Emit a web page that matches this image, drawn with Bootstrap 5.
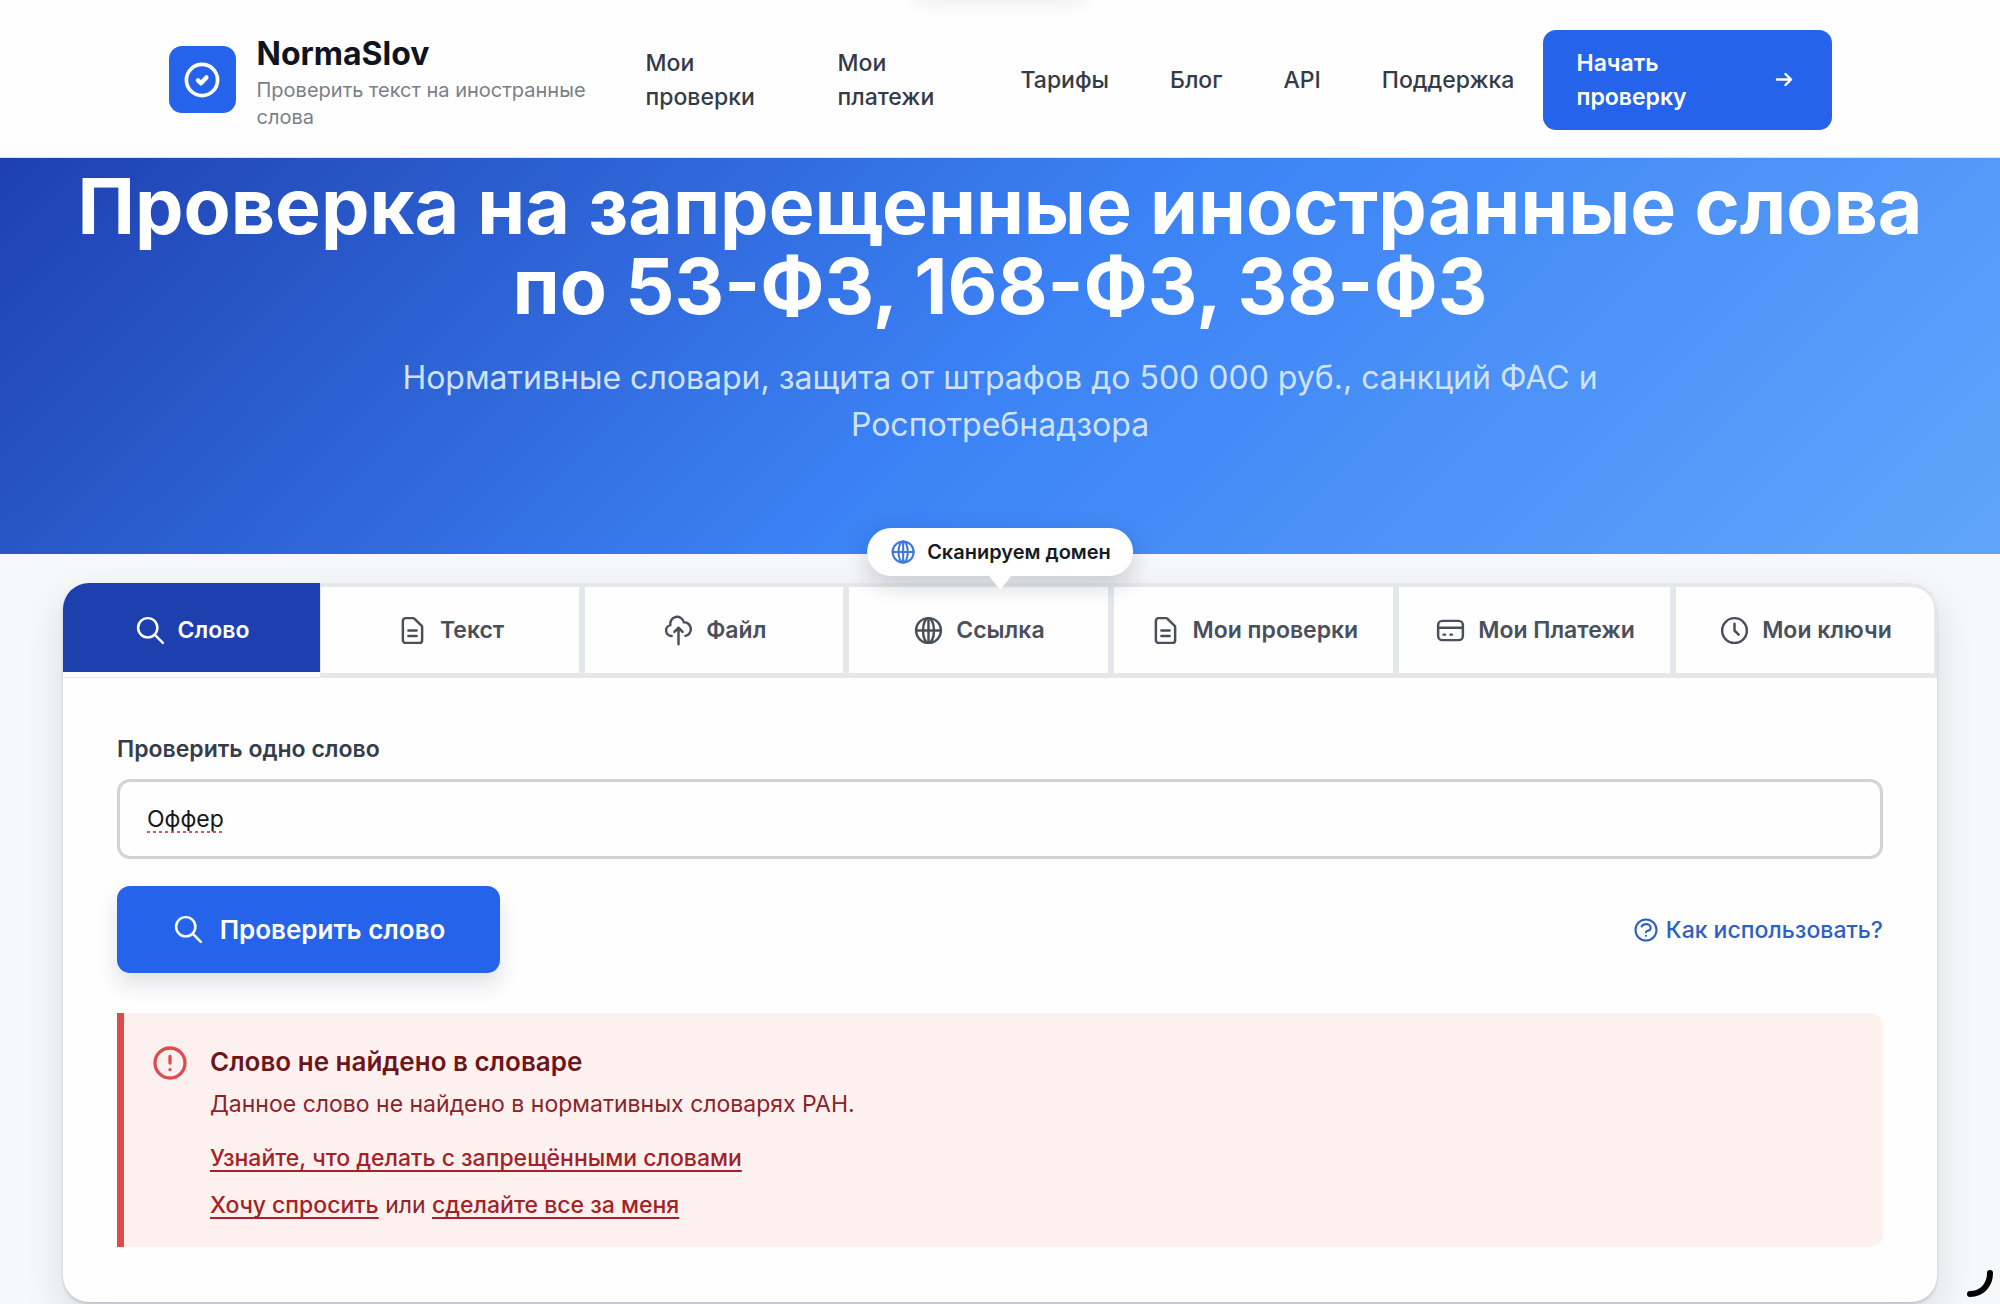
<!DOCTYPE html>
<html lang="ru">
<head>
<meta charset="utf-8">
<meta name="viewport" content="width=device-width, initial-scale=1">
<title>NormaSlov</title>
<link href="https://cdn.jsdelivr.net/npm/bootstrap@5.3.0/dist/css/bootstrap.min.css" rel="stylesheet">
<style>
body{font-family:Inter,"Noto Sans",sans-serif;background:#f7f8fa;color:#111827;font-size:23px;line-height:34px;min-height:100vh}
.ico{width:33px;height:33px;fill:none;stroke:currentColor;stroke-width:1.8;stroke-linecap:round;stroke-linejoin:round;flex:none}
.ico-sm{width:28px;height:28px}
.site-header{background:#fefefe;border-bottom:1px solid #dfe4ec;min-height:158px;padding-top:2px}
.header-inner{width:100%;max-width:1663px}
.logo-box{width:67px;height:67px;border-radius:13px;background:#2563eb;color:#fff;flex:none}
.logo-box .ico{width:44px;height:44px;stroke-width:2}
.brand-text{width:345px;margin-left:21px;padding-top:6px}
.brand-name{font-size:32px;line-height:38px;font-weight:700;color:#0f1422;margin-bottom:4px}
.brand-sub{font-size:20px;line-height:27px;color:#7b7f87}
.main-nav a{color:#343b47;font-weight:500;text-decoration:none}
.main-nav{gap:61px;margin-left:44px}
.link-two{width:131px}
.link-two + .link-two{width:122px}
.start-btn{width:289px;padding:16px 34px;border:0;border-radius:13px;background:#2563eb;color:#fff;font-size:23px;line-height:34px;font-weight:600}
.hero{background:linear-gradient(135deg,#1e40af 0%,#3b82f6 50%,#60a5fa 100%);color:#fff;height:396px;padding-top:8px}
.hero h1{font-size:77px;line-height:80px;font-weight:700;margin-bottom:28px}
.hero p{font-size:32px;line-height:47px;color:#cfe2fd;max-width:1200px}
.tool-wrap{margin:29px 63px 0}
.tool-card{border-radius:26px;background:#fefefe;box-shadow:0 16px 40px rgba(15,23,42,.13),0 2px 3px rgba(15,23,42,.16)}
.tab-row{height:95px;border-radius:26px 26px 0 0;overflow:hidden}
.tab-btn{flex:1 1 0;white-space:nowrap;padding:0 35px;gap:11px;border:3px solid #e5e7eb;border-top-width:4px;border-bottom-width:5px;background:#fefefe;color:#4a505b;font-size:23px;font-weight:600}
.tab-btn:nth-child(2){border-left-width:1px}
.tab-btn:last-child{border-top-right-radius:26px}
.tab-btn.current{flex:0 0 257px;background:linear-gradient(#1e40af,#1e40af) top/100% 89px no-repeat #fff;color:#fff;border:0;border-bottom:1px solid #e5e7eb}
.domain-tip{position:absolute;left:50%;top:-55px;transform:translateX(-50%);z-index:2;height:48px;padding:0 22px;gap:10px;border-radius:24px;background:#fff;color:#161b26;font-size:20px;font-weight:600;white-space:nowrap;box-shadow:0 8px 24px rgba(15,23,42,.2)}
.domain-tip::after{content:"";position:absolute;left:50%;top:100%;margin-left:-11px;border:11px solid transparent;border-top:14px solid #fff;border-bottom:0}
.domain-tip .ico{color:#3f78dc}
.panel{padding:54px 54px 55px}
.field-label{font-weight:600;color:#363d4a;line-height:34px;margin-bottom:13px}
.word-input{height:80px;padding:0 27px;border:3px solid #d1d3d7;border-radius:13px;font-size:23px;color:#15171c;background:#fefefe;text-decoration:underline dotted #d9534f 3px;text-underline-offset:4px;text-decoration-skip-ink:none}
.action-row{margin:27px 0 40px}
.check-btn{width:383px;height:87px;border:0;border-radius:13px;background:#2563eb;color:#fff;font-size:26px;font-weight:600;gap:15px;box-shadow:0 12px 22px rgba(15,23,42,.12)}
.help-link{color:#2d5fc4;font-weight:500;text-decoration:none;gap:6px}
.notice{border-left:7px solid #e04a4b;border-radius:0 13px 13px 0;background:#fdf1f0;color:#8c2327;padding:29px 27px 25px 26px}
.notice .ico{width:40px;height:40px;color:#dd4d4f;stroke-width:2;margin-top:1px}
.notice h2{font-size:26px;line-height:40px;font-weight:600;color:#6e1519;margin-bottom:5px}
.notice p{margin-bottom:20px}
.notice .link-line{margin-bottom:13px}
.notice a{color:#a32226;font-weight:500;text-decoration:underline;text-underline-offset:4px;text-decoration-thickness:2px;text-decoration-skip-ink:none}
.edge-glow{position:absolute;top:-42px;left:50%;transform:translateX(-50%);width:180px;height:38px;border-radius:19px;box-shadow:0 6px 22px rgba(0,0,0,.08)}
.corner-arc{position:fixed;right:4px;bottom:4px;width:32px;height:32px}
</style>
</head>
<body class="position-relative">
<header class="site-header d-flex justify-content-center">
  <div class="header-inner d-flex align-items-center">
    <div class="d-flex align-items-center">
      <span class="logo-box d-flex align-items-center justify-content-center"><svg class="ico" viewBox="0 0 24 24"><circle cx="12" cy="12" r="8.5"/><path stroke-width="2.400" d="M9.800 12.200l1.600 1.600 3-3.200"/></svg></span>
      <div class="brand-text"><div class="brand-name">NormaSlov</div><div class="brand-sub">Проверить текст на иностранные слова</div></div>
    </div>
    <nav class="main-nav d-flex align-items-center">
      <a class="link-two" href="#">Мои проверки</a>
      <a class="link-two" href="#">Мои платежи</a>
      <a href="#">Тарифы</a>
      <a href="#">Блог</a>
      <a href="#">API</a>
      <a href="#">Поддержка</a>
    </nav>
    <button type="button" class="start-btn d-flex align-items-center justify-content-between text-start ms-auto"><span>Начать<br>проверку</span><svg class="ico" viewBox="0 0 33 33"><path stroke-width="2.400" d="M12 16.500h14M20.500 11l5.500 5.500-5.500 5.500"/></svg></button>
  </div>
</header>
<div class="edge-glow"></div>
<section class="hero text-center">
  <h1>Проверка на запрещенные иностранные слова<br>по 53-ФЗ, 168-ФЗ, 38-ФЗ</h1>
  <p class="mx-auto mb-0">Нормативные словари, защита от штрафов до 500 000 руб., санкций ФАС и Роспотребнадзора</p>
</section>
<main class="tool-wrap position-relative">
  <div class="domain-tip d-flex align-items-center"><svg class="ico ico-sm" viewBox="0 0 24 24"><circle cx="12" cy="12" r="9"/><ellipse cx="12" cy="12" rx="4" ry="9"/><path d="M3 12h18M12 3v18"/></svg>Сканируем домен</div>
  <div class="tool-card">
    <div class="tab-row d-flex" role="tablist">
      <button type="button" role="tab" aria-selected="true" class="tab-btn current d-flex align-items-center justify-content-center"><svg class="ico" viewBox="0 0 24 24"><path d="M21 21l-6-6m2-5a7 7 0 11-14 0 7 7 0 0114 0z"/></svg>Слово</button>
      <button type="button" role="tab" class="tab-btn d-flex align-items-center justify-content-center"><svg class="ico" viewBox="0 0 24 24"><path d="M9 12h6m-6 4h6m2 5H7a2 2 0 01-2-2V5a2 2 0 012-2h5.586a1 1 0 01.707.293l5.414 5.414a1 1 0 01.293.707V19a2 2 0 01-2 2z"/></svg>Текст</button>
      <button type="button" role="tab" class="tab-btn d-flex align-items-center justify-content-center"><svg class="ico" viewBox="0 0 24 24"><path d="M7 16a4 4 0 01-.88-7.903A5 5 0 1115.900 6L16 6a5 5 0 011 9.900M15 13l-3-3m0 0l-3 3m3-3v12"/></svg>Файл</button>
      <button type="button" role="tab" class="tab-btn d-flex align-items-center justify-content-center"><svg class="ico" viewBox="0 0 24 24"><circle cx="12" cy="12" r="9"/><ellipse cx="12" cy="12" rx="4" ry="9"/><path d="M3 12h18M12 3v18"/></svg>Ссылка</button>
      <button type="button" role="tab" class="tab-btn d-flex align-items-center justify-content-center"><svg class="ico" viewBox="0 0 24 24"><path d="M9 12h6m-6 4h6m2 5H7a2 2 0 01-2-2V5a2 2 0 012-2h5.586a1 1 0 01.707.293l5.414 5.414a1 1 0 01.293.707V19a2 2 0 01-2 2z"/></svg>Мои проверки</button>
      <button type="button" role="tab" class="tab-btn d-flex align-items-center justify-content-center"><svg class="ico" viewBox="0 0 24 24"><path d="M3 10h18M7 15h1m4 0h1m-7 4h12a3 3 0 003-3V8a3 3 0 00-3-3H6a3 3 0 00-3 3v8a3 3 0 003 3z"/></svg>Мои Платежи</button>
      <button type="button" role="tab" class="tab-btn d-flex align-items-center justify-content-center"><svg class="ico" viewBox="0 0 24 24"><path d="M12 7v5l3 3m6-3a9 9 0 11-18 0 9 9 0 0118 0z"/></svg>Мои ключи</button>
    </div>
    <form class="panel">
      <label class="field-label d-block" for="word">Проверить одно слово</label>
      <input class="word-input w-100 d-block" id="word" type="text" value="Оффер">
      <div class="action-row d-flex align-items-center justify-content-between">
        <button type="button" class="check-btn d-flex align-items-center justify-content-center"><svg class="ico" viewBox="0 0 24 24"><path d="M21 21l-6-6m2-5a7 7 0 11-14 0 7 7 0 0114 0z"/></svg>Проверить слово</button>
        <a class="help-link d-flex align-items-center" href="#"><svg class="ico ico-sm" viewBox="0 0 24 24"><path d="M8.228 9c.549-1.165 2.030-2 3.772-2 2.210 0 4 1.343 4 3 0 1.400-1.278 2.575-3.006 2.907-.542.104-.994.540-.994 1.093m0 3h.010M21 12a9 9 0 11-18 0 9 9 0 0118 0z"/></svg>Как использовать?</a>
      </div>
      <div class="notice d-flex" role="alert">
        <svg class="ico" viewBox="0 0 24 24"><path d="M12 8v4m0 4h.010M21 12a9 9 0 11-18 0 9 9 0 0118 0z"/></svg>
        <div class="ms-3 ps-1">
          <h2>Слово не найдено в словаре</h2>
          <p>Данное слово не найдено в нормативных словарях РАН.</p>
          <p class="link-line"><a href="#">Узнайте, что делать с запрещёнными словами</a></p>
          <p class="link-line mb-0"><a href="#">Хочу спросить</a> или <a href="#">сделайте все за меня</a></p>
        </div>
      </div>
    </form>
  </div>
</main>
<svg class="corner-arc" viewBox="0 0 32 32"><path d="M26 5C26 17 18 26 6 26" fill="none" stroke="#000" stroke-width="6" stroke-linecap="round"/></svg>
<script src="https://cdn.jsdelivr.net/npm/bootstrap@5.3.0/dist/js/bootstrap.bundle.min.js"></script>
</body>
</html>
